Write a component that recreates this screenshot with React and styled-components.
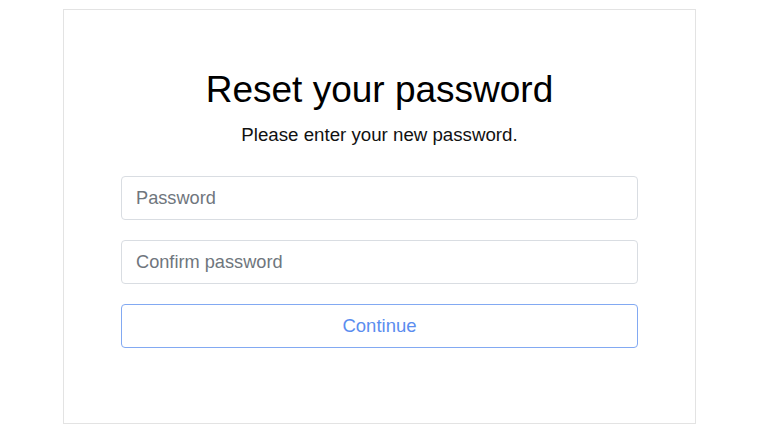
import React from "react";
import styled, { createGlobalStyle } from "styled-components";

const Global = createGlobalStyle`
  html, body { margin: 0; padding: 0; background: #ffffff; }
  body { font-family: "Liberation Sans", Arial, sans-serif; }
  * { box-sizing: border-box; }
`;

const Page = styled.div`
  padding: 9px 0 0 63px;
  width: 768px;
  height: 434px;
`;

const Card = styled.div`
  width: 633px;
  height: 415px;
  border: 1px solid #e3e3e3;
  background: #fff;
  padding: 57px 57px 0 57px;
  display: flex;
  flex-direction: column;
  align-items: stretch;
`;

const Title = styled.h1`
  margin: 0;
  font-size: 37px;
  line-height: 46px;
  font-weight: 400;
  color: #000;
  text-align: center;
`;

const Subtitle = styled.p`
  margin: 11px 0 0;
  font-size: 18.7px;
  line-height: 22px;
  color: #111;
  text-align: center;
`;

const Form = styled.form`
  margin-top: 30px;
  display: flex;
  flex-direction: column;
  gap: 20px;
`;

const Input = styled.input`
  height: 44px;
  width: 100%;
  border: 1px solid #d9dde2;
  border-radius: 4px;
  padding: 0 14px;
  font-family: "Liberation Sans", Arial, sans-serif;
  font-size: 18.2px;
  color: #222;
  outline: none;
  &::placeholder { color: #6f767d; }
`;

const Button = styled.button`
  height: 44px;
  width: 100%;
  border: 1px solid #82a9f2;
  border-radius: 4px;
  background: #fff;
  color: #5b8def;
  font-family: "Liberation Sans", Arial, sans-serif;
  font-size: 18.5px;
  cursor: pointer;
`;

export default function App() {
  return (
    <>
      <Global />
      <Page>
        <Card>
          <Title>Reset your password</Title>
          <Subtitle>Please enter your new password.</Subtitle>
          <Form onSubmit={(e) => e.preventDefault()}>
            <Input type="password" placeholder="Password" />
            <Input type="password" placeholder="Confirm password" />
            <Button type="submit">Continue</Button>
          </Form>
        </Card>
      </Page>
    </>
  );
}
